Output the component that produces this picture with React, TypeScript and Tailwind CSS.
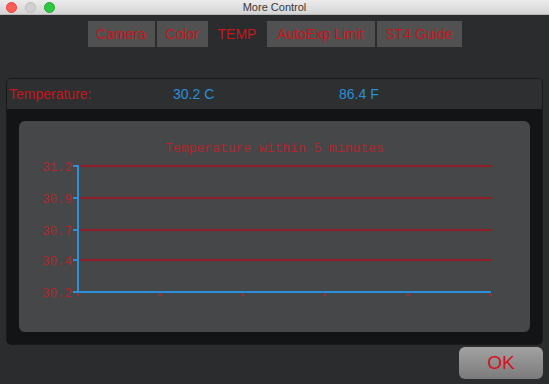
import React from 'react';

const tabs = [
  { label: 'Camera', w: 'w-[67px]', active: false },
  { label: 'Color', w: 'w-[51px]', active: false },
  { label: 'TEMP', w: 'w-[55px]', active: true },
  { label: 'AutoExp Limit', w: 'w-[108px]', active: false },
  { label: 'ST4 Guide', w: 'w-[85px]', active: false },
];

const yLabels = [
  { t: '31.2', y: 45 },
  { t: '30.9', y: 77 },
  { t: '30.7', y: 109 },
  { t: '30.4', y: 139 },
  { t: '30.2', y: 171 },
];

const xTicks = [59, 141, 224, 306, 389, 472];

function TempChart() {
  return (
    <svg width="511" height="211" viewBox="0 0 511 211" className="block" shapeRendering="crispEdges">
      <text
        x="255.5"
        y="31"
        textAnchor="middle"
        fill="#b3262d"
        fontSize="13"
        fontFamily="'Liberation Mono', monospace"
      >
        Temperature within 5 minutes
      </text>
      {yLabels.map((l) => (
        <g key={l.t}>
          <rect x="60" y={l.y - 1} width="413" height="2" fill="#921d26" />
          <rect x="54" y={l.y - 1} width="5" height="1.5" fill="#2b8fd9" />
          <text
            x="53"
            y={l.y + 4.5}
            textAnchor="end"
            fill="#b3262d"
            fontSize="12.5"
            fontFamily="'Liberation Mono', monospace"
          >
            {l.t}
          </text>
        </g>
      ))}
      <rect x="58" y="44" width="1.5" height="128" fill="#2b8fd9" />
      <rect x="58" y="170" width="414" height="1.5" fill="#2b8fd9" />
      {xTicks.map((x) => (
        <rect key={x} x={x - 1} y="172.5" width="2" height="2" fill="#b3262d" />
      ))}
    </svg>
  );
}

export default function App() {
  return (
    <div className="w-[549px] h-[384px] flex flex-col bg-[#2b2c2e] overflow-hidden font-['Liberation_Sans',Arial,sans-serif]">
      {/* title bar */}
      <div className="h-[15px] relative flex items-center justify-center bg-gradient-to-b from-[#ececec] to-[#d4d4d4] border-b border-[#b8b8b8]">
        <div className="absolute left-[6px] top-[2px] flex gap-[8px]">
          <span className="w-[11px] h-[11px] rounded-full bg-[#fc5e57] border border-[#e2463f]" />
          <span className="w-[11px] h-[11px] rounded-full bg-[#d0d0d0] border border-[#bdbdbd]" />
          <span className="w-[11px] h-[11px] rounded-full bg-[#2bc840] border border-[#1faa32]" />
        </div>
        <span className="text-[11px] leading-none text-[#3a3a3a]">More Control</span>
      </div>

      {/* tabs */}
      <div className="mt-[6px] flex justify-center gap-[2px]">
        {tabs.map((t) => (
          <div
            key={t.label}
            className={`${t.w} h-[26px] flex items-center justify-center text-[14px] text-[#c8161d] ${
              t.active ? '' : 'bg-[#515151]'
            }`}
          >
            {t.label}
          </div>
        ))}
      </div>

      {/* panel */}
      <div className="mt-[31px] ml-[6px] w-[537px] h-[267px] flex flex-col rounded-[5px] border border-[#18191a] overflow-hidden">
        <div className="h-[31px] flex items-center bg-[#2e2f31] text-[14px]">
          <span className="ml-[2px] w-[164px] text-[#c8161d]">Temperature:</span>
          <span className="w-[166px] text-[#2a8fdb]">30.2 C</span>
          <span className="text-[#2a8fdb]">86.4 F</span>
        </div>
        <div className="flex-1 bg-[#131416] pt-[12px] px-[12px] pb-[12px]">
          <div className="w-[511px] h-[211px] rounded-[6px] bg-[#464748]">
            <TempChart />
          </div>
        </div>
      </div>

      {/* OK button */}
      <div className="mt-[2px] flex justify-end pr-[6px]">
        <button className="w-[84px] h-[32px] rounded-[6px] bg-gradient-to-b from-[#a3a2a2] to-[#7b7b7b] text-[19px] text-[#d3121c] flex items-center justify-center pt-[1px]">
          OK
        </button>
      </div>
    </div>
  );
}
